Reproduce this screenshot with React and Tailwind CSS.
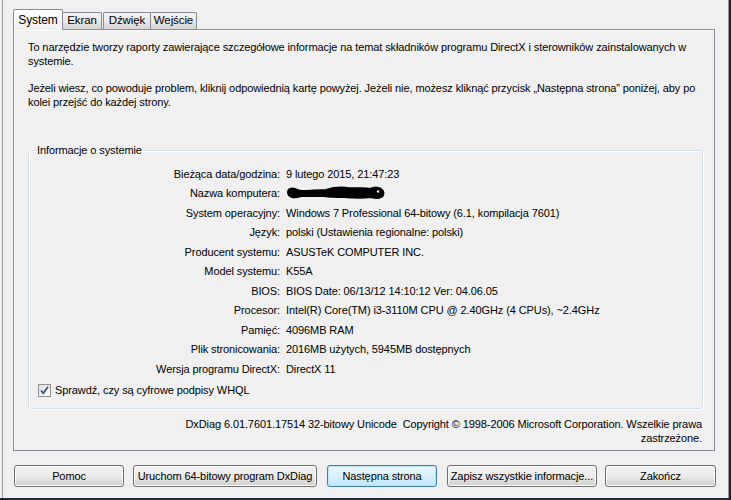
import React from 'react';

const rows = [
  ['Bieżąca data/godzina:', '9 lutego 2015, 21:47:23'],
  ['Nazwa komputera:', null],
  ['System operacyjny:', 'Windows 7 Professional 64-bitowy (6.1, kompilacja 7601)'],
  ['Język:', 'polski (Ustawienia regionalne: polski)'],
  ['Producent systemu:', 'ASUSTeK COMPUTER INC.'],
  ['Model systemu:', 'K55A'],
  ['BIOS:', 'BIOS Date: 06/13/12 14:10:12 Ver: 04.06.05'],
  ['Procesor:', 'Intel(R) Core(TM) i3-3110M CPU @ 2.40GHz (4 CPUs), ~2.4GHz'],
  ['Pamięć:', '4096MB RAM'],
  ['Plik stronicowania:', '2016MB użytych, 5945MB dostępnych'],
  ['Wersja programu DirectX:', 'DirectX 11'],
];

const tabs = ['Ekran', 'Dźwięk', 'Wejście'];

const buttons = [
  { label: 'Pomoc', cls: 'w-[110px] ml-[1px]' },
  { label: 'Uruchom 64-bitowy program DxDiag', cls: 'w-[184px] ml-[9px]' },
  { label: 'Następna strona', cls: 'w-[110px] ml-[10px]', primary: true },
  { label: 'Zapisz wszystkie informacje...', cls: 'w-[150px] ml-[10px]' },
  { label: 'Zakończ', cls: 'w-[111px] ml-[8px]' },
];

// scribbled-out machine name
function Scribble() {
  return (
    <svg width="100" height="14" viewBox="0 0 100 14" className="block">
      <path
        d="M2 6 C2 3 5 2 9 3 C12 4 13 5 16 5 C24 5 32 4 40 4 C46 2 54 1 62 2 C70 2 78 2 84 3 C88 1 94 1 96 4 C98 6 98 10 95 11 C92 13 88 12 85 11 C78 12 68 12 58 11 C50 11 44 11 38 10 C30 10 22 10 15 10 C12 11 9 12 6 11 C3 10 2 9 2 6 Z"
        fill="#000"
        stroke="#000"
        strokeWidth="2"
        strokeLinejoin="round"
      />
      <circle cx="92" cy="5.5" r="1.2" fill="#f0f0f0" />
    </svg>
  );
}

function Checkbox() {
  return (
    <div className="w-[13px] h-[13px] border border-[#8f8f8f] bg-gradient-to-br from-[#dcdcdc] to-[#ffffff] flex items-center justify-center">
      <svg width="11" height="11" viewBox="0 0 11 11">
        <path d="M2 5.5 L4.3 8.3 L9 1.8" stroke="#3b4f8e" strokeWidth="1.8" fill="none" strokeLinejoin="round" />
      </svg>
    </div>
  );
}

function Button({ label, cls, primary }) {
  return (
    <div
      className={`${cls} h-[22px] rounded-[3px] border flex items-center justify-center whitespace-nowrap ${
        primary
          ? 'border-[#3c7fb1] bg-gradient-to-b from-[#eaf6fd] via-[#d9f0fc] to-[#bee6fd] shadow-[inset_0_0_0_1px_#bfe4f8]'
          : 'border-[#707070] bg-gradient-to-b from-[#f2f2f2] via-[#ebebeb] to-[#cfcfcf] shadow-[inset_0_0_0_1px_#fcfcfc]'
      }`}
    >
      {label}
    </div>
  );
}

export default function App() {
  return (
    <div
      className="w-[731px] h-[500px] bg-[#f0f0f0] pl-[2px] border-r-2 border-b-2 border-[#1e2630] overflow-hidden text-[11px] tracking-[-0.1px] text-black"
      style={{ fontFamily: '"Liberation Sans", Arial, sans-serif' }}
    >
      <div className="h-full border-l border-r border-[#9a9a9a] pl-[10px] pt-[9px]">
        {/* tab strip */}
        <div className="flex items-end h-[21px] relative z-10">
          <div className="w-[50px] h-[21px] border border-b-0 border-[#898c95] rounded-t-[2px] bg-gradient-to-b from-[#ffffff] to-[#f0f0f0] flex items-center justify-center text-[12px] pb-[1px]">
            System
          </div>
          {tabs.map((t, i) => (
            <div
              key={t}
              className={`h-[17px] mb-[1px] border border-b-0 border-[#898c95] rounded-t-[2px] bg-gradient-to-b from-[#f2f2f2] via-[#e9e9e9] to-[#d5d5d5] flex items-center justify-center text-[11.5px] ${
                i === 0 ? 'w-[40px] -ml-px' : i === 1 ? 'w-[48px] ml-[1px]' : 'w-[47px] ml-[-1px]'
              }`}
            >
              {t}
            </div>
          ))}
        </div>

        {/* tab page */}
        <div className="w-[702px] h-[422px] -mt-px border border-[#898c95] bg-[#f0f0f0] shadow-[inset_1px_1px_0_#ffffff]">
          <div className="pl-[14px] pt-[10px] leading-[14px] whitespace-nowrap">
            <div>To narzędzie tworzy raporty zawierające szczegółowe informacje na temat składników programu DirectX i sterowników zainstalowanych w</div>
            <div>systemie.</div>
            <div className="mt-[13px]">Jeżeli wiesz, co powoduje problem, kliknij odpowiednią kartę powyżej. Jeżeli nie, możesz kliknąć przycisk „Następna strona” poniżej, aby po</div>
            <div>kolei przejść do każdej strony.</div>
          </div>

          <fieldset className="ml-[14px] mt-[34px] w-[675px] h-[266px] border border-[#d5dfe5] rounded-[3px] shadow-[inset_1px_1px_0_#ffffff,1px_1px_0_#ffffff]">
            <legend className="ml-[6px] px-[2px] leading-[14px]">Informacje o systemie</legend>
            <div className="pt-[7px]">
              {rows.map(([label, value]) => (
                <div key={label} className="flex items-center h-[19.5px] whitespace-nowrap">
                  <div className="w-[251px] text-right shrink-0">{label}</div>
                  <div className="pl-[6px]">{value === null ? <Scribble /> : value}</div>
                </div>
              ))}
              <div className="flex items-center gap-[4px] pl-[9px] mt-[5px] h-[14px]">
                <Checkbox />
                <span>Sprawdź, czy są cyfrowe podpisy WHQL</span>
              </div>
            </div>
          </fieldset>

          <div className="mt-[8px] pr-[12px] text-right leading-[14px] whitespace-nowrap">
            <div>DxDiag 6.01.7601.17514 32-bitowy Unicode&nbsp; Copyright © 1998-2006 Microsoft Corporation. Wszelkie prawa</div>
            <div>zastrzeżone.</div>
          </div>
        </div>

        {/* dialog buttons */}
        <div className="flex mt-[14px]">
          {buttons.map((b) => (
            <Button key={b.label} {...b} />
          ))}
        </div>
      </div>
    </div>
  );
}
